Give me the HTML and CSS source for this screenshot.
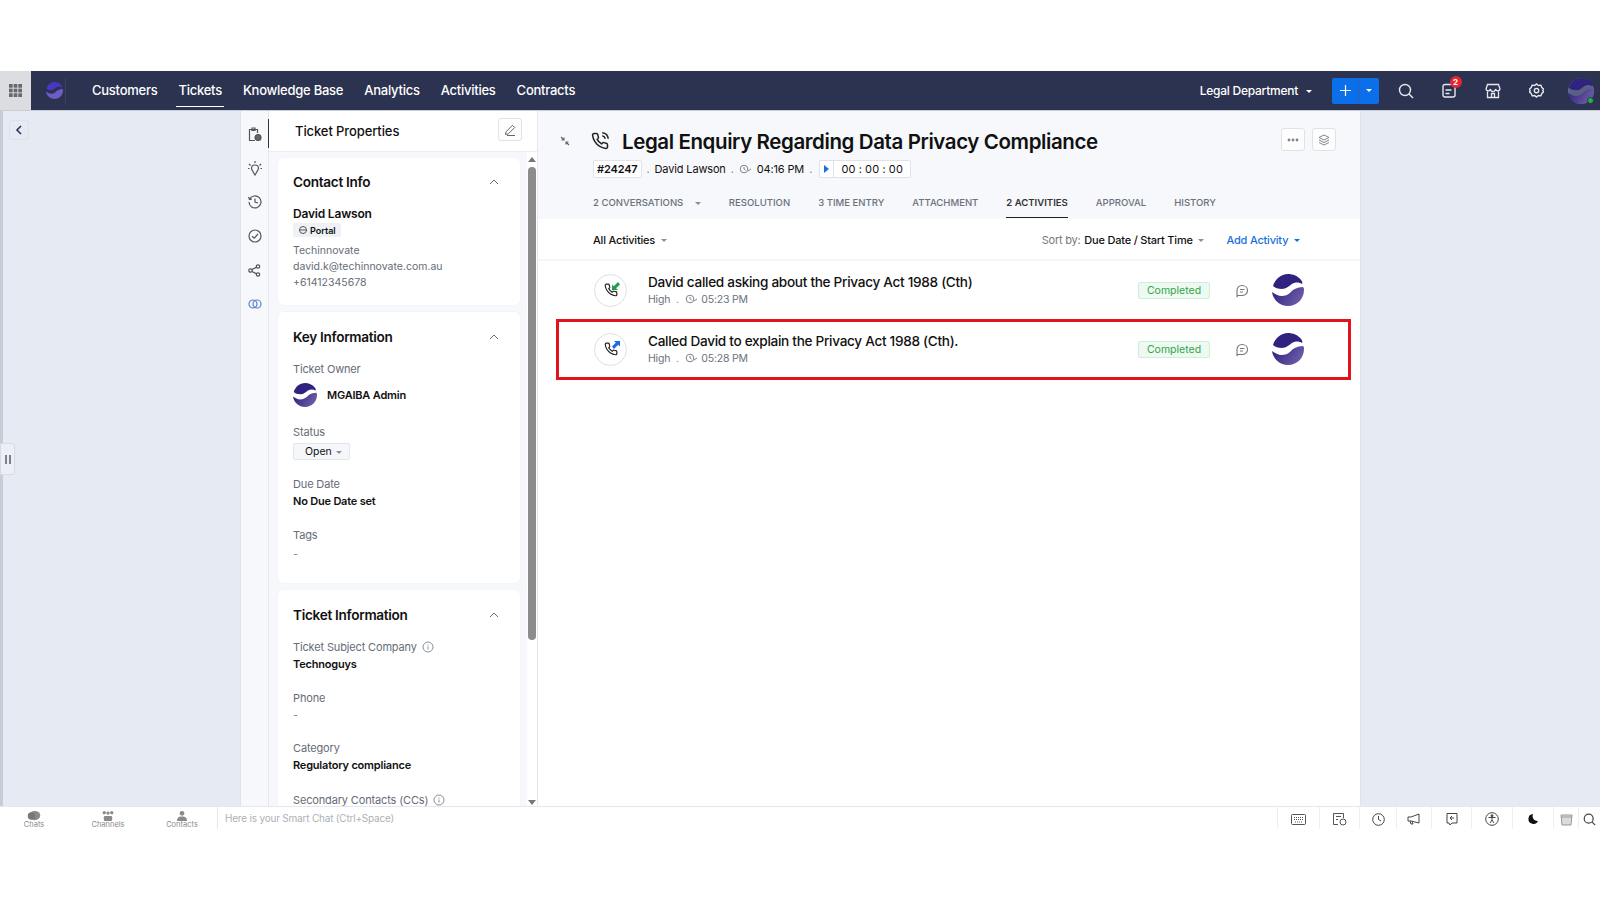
FILE: index.html
```html
<!DOCTYPE html>
<html lang="en">
<head>
    <meta charset="UTF-8">
    <title>Legal Enquiry Regarding Data Privacy Compliance</title>
    <link rel="stylesheet" href="styles.css">
</head>
<body>
    <svg class="defs" width="0" height="0">
        <defs>
            <linearGradient id="logoGrad" x1="0" y1="0" x2="1" y2="0.4">
                <stop offset="0" stop-color="#2c1f7c"/>
                <stop offset="1" stop-color="#6b5aa6"/>
            </linearGradient>
            <symbol id="logo" viewBox="0 0 32 32">
                <path fill="#30237f" d="M1 12C3 5 9 0 16 0c5 0 10 2 13 6 1 1 2 3 1 4-3-2-7-2-10 0-3 2-6 5-10 5-4 0-7-1-9-3z"/>
                <path fill="url(#logoGrad)" d="M31 13c1 1 1 2 1 3 0 9-7 16-16 16C8 32 1 26 0 18c3 2 6 4 10 4 5 0 8-3 11-6 3-2 7-3 10-3z"/>
            </symbol>
            <symbol id="logoBright" viewBox="0 0 32 32">
                <path fill="#4a36c4" d="M1 12C3 5 9 0 16 0c5 0 10 2 13 6 1 1 2 3 1 4-3-2-7-2-10 0-3 2-6 5-10 5-4 0-7-1-9-3z"/>
                <path fill="#6d5cc8" d="M31 13c1 1 1 2 1 3 0 9-7 16-16 16C8 32 1 26 0 18c3 2 6 4 10 4 5 0 8-3 11-6 3-2 7-3 10-3z"/>
            </symbol>
            <symbol id="phone" viewBox="0 0 24 24">
                <path fill="none" stroke="currentColor" stroke-width="2" stroke-linejoin="round" d="M22 16.9v3a2 2 0 0 1-2.2 2 19.8 19.8 0 0 1-8.6-3 19.5 19.5 0 0 1-6-6 19.8 19.8 0 0 1-3.1-8.7A2 2 0 0 1 4.100 2h3a2 2 0 0 1 2 1.700c.1 1 .4 1.900.7 2.800a2 2 0 0 1-.4 2.100L8.100 9.900a16 16 0 0 0 6 6l1.300-1.300a2 2 0 0 1 2.100-.4c.9.3 1.800.6 2.800.7a2 2 0 0 1 1.700 2z"/>
            </symbol>
            <symbol id="phoneCall" viewBox="0 0 24 24">
                <path fill="none" stroke="currentColor" stroke-width="2" stroke-linejoin="round" d="M22 16.9v3a2 2 0 0 1-2.2 2 19.8 19.8 0 0 1-8.6-3 19.5 19.5 0 0 1-6-6 19.8 19.8 0 0 1-3.1-8.700A2 2 0 0 1 4.100 2h3a2 2 0 0 1 2 1.700c.1 1 .4 1.900.7 2.800a2 2 0 0 1-.4 2.100L8.100 9.900a16 16 0 0 0 6 6l1.300-1.300a2 2 0 0 1 2.100-.4c.9.3 1.800.6 2.800.7a2 2 0 0 1 1.700 2zM15 5a5 5 0 0 1 4 4M15 1a9 9 0 0 1 8 8"/>
            </symbol>
            <symbol id="chevUp" viewBox="0 0 12 12">
                <path fill="none" stroke="#666d7a" stroke-width="1" d="M2 8l4-4 4 4"/>
            </symbol>
            <symbol id="info" viewBox="0 0 12 12">
                <circle cx="6" cy="6" r="5" fill="none" stroke="#8a909c"/>
                <path stroke="#8a909c" d="M6 5.500v3M6 3.500v1"/>
            </symbol>
            <symbol id="chat" viewBox="0 0 14 14">
                <path fill="none" stroke="#777" stroke-width="1.100" d="M7 1.500c3 0 5.500 2 5.500 5S10 11.500 7 11.500H2.500l-.5 1.500V6.500c0-3 2-5 5-5z"/>
                <path stroke="#777" d="M5 5.500h4.500M5 8h3"/>
            </symbol>
            <symbol id="clockSmall" viewBox="0 0 14 10">
                <circle cx="5" cy="5" r="3.800" fill="none" stroke="#7d8491"/>
                <path fill="none" stroke="#7d8491" d="M5 3v2l1.500 1M9 7l3-2"/>
            </symbol>
        </defs>
    </svg>

    <div class="top-space"></div>

    <!-- Top navigation -->
    <header class="navbar">
        <div class="apps">
            <svg width="13" height="13" viewBox="0 0 14 14" fill="#666a70">
                <rect width="4" height="4"/><rect x="5" width="4" height="4"/><rect x="10" width="4" height="4"/>
                <rect y="5" width="4" height="4"/><rect x="5" y="5" width="4" height="4"/><rect x="10" y="5" width="4" height="4"/>
                <rect y="10" width="4" height="4"/><rect x="5" y="10" width="4" height="4"/><rect x="10" y="10" width="4" height="4"/>
            </svg>
        </div>
        <div class="brand"><svg width="17" height="17"><use href="#logoBright"/></svg></div>
        <nav class="nav-links">
            <a>Customers</a>
            <a class="active">Tickets</a>
            <a>Knowledge Base</a>
            <a>Analytics</a>
            <a>Activities</a>
            <a>Contracts</a>
        </nav>
        <div class="nav-right">
            <span class="dept">Legal Department <i class="caret caret-white"></i></span>
            <div class="add-btn">
                <span class="add-plus">
                    <svg width="11" height="11" viewBox="0 0 12 12"><path stroke="#fff" stroke-width="1.300" d="M6 0v12M0 6h12"/></svg>
                </span>
                <span class="add-more"><i class="caret caret-white"></i></span>
            </div>
            <span class="nav-icon">
                <svg width="16" height="16" viewBox="0 0 16 16" fill="none" stroke="#e6e8ee" stroke-width="1.400"><circle cx="7" cy="7" r="5.500"/><path d="M11 11l4 4"/></svg>
            </span>
            <span class="nav-icon">
                <svg width="14" height="15" viewBox="0 0 14 15" fill="none" stroke="#e6e8ee" stroke-width="1.400"><rect x="1" y="1.500" width="12" height="12.500" rx="2"/><path d="M3.500 7h6M3.500 10.500h4"/></svg>
                <b class="badge">2</b>
            </span>
            <span class="nav-icon">
                <svg width="16" height="16" viewBox="0 0 16 16" fill="none" stroke="#e6e8ee" stroke-width="1.300"><path d="M2.500 1.500h11L15 6a2.300 2.300 0 0 1-4.500 0 2.400 2.400 0 0 1-5 0A2.300 2.300 0 0 1 1 6zM2.500 8.500v6h11v-6M6.500 14.500V10.500h3v4"/></svg>
            </span>
            <span class="nav-icon">
                <svg width="15" height="15" viewBox="0 0 24 24" fill="none" stroke="#e6e8ee" stroke-width="2.200"><circle cx="12" cy="12" r="3.500"/><path d="M12 1.500l3 2.500 4-.5 1.500 3.800 3 2.700-1.500 2 1.500 2-3 2.700-1.500 3.800-4-.5-3 2.500-3-2.500-4 .5-1.500-3.800-3-2.700 1.500-2-1.500-2 3-2.700L5 3.500l4 .5z"/></svg>
            </span>
            <span class="user">
                <svg width="26" height="26"><circle cx="13" cy="13" r="12.500" fill="#5a5f85" stroke="#6d7290"/><use href="#logo" width="26" height="26"/></svg>
                <i class="online"></i>
            </span>
        </div>
    </header>

    <div class="workspace">
        <!-- Collapsed left pane -->
        <aside class="left-pane">
            <button class="collapse-btn">
                <svg width="8" height="10" viewBox="0 0 8 10"><path fill="none" stroke="#2b3350" stroke-width="1.600" d="M6 1L2 5l4 4"/></svg>
            </button>
            <div class="pane-handle"><i></i><i></i></div>
        </aside>

        <!-- Icon rail -->
        <div class="rail">
            <span class="rail-icon rail-active">
                <svg width="14" height="15" viewBox="0 0 14 15" fill="none" stroke="#555" stroke-width="1.200"><path d="M7 13.500H1.500V2.500h8V6M4 1h3v2.500H4z"/><circle cx="10" cy="10.500" r="3" fill="#666"/></svg>
            </span>
            <span class="rail-icon">
                <svg width="14" height="15" viewBox="0 0 14 15" fill="none" stroke="#555" stroke-width="1.200"><path d="M7 4c2.500 0 3.500 1.800 3.500 3.300 0 1.700-1.500 2.700-2 4.200L7 14l-1.500-2.500c-.5-1.500-2-2.500-2-4.200C3.500 5.800 4.500 4 7 4zM7 0v2M1 3l1.500 1.500M13 3l-1.500 1.500M0 7.500h1.500M12.500 7.500H14"/></svg>
            </span>
            <span class="rail-icon">
                <svg width="14" height="14" viewBox="0 0 14 14" fill="none" stroke="#555" stroke-width="1.200"><path d="M1.500 4.500A6 6 0 1 1 1 7M7 3.500V7l3 1M0.500 2l1 2.500L4 4"/></svg>
            </span>
            <span class="rail-icon">
                <svg width="14" height="14" viewBox="0 0 14 14" fill="none" stroke="#555" stroke-width="1.200"><circle cx="7" cy="7" r="6"/><path d="M4 7.200l2.200 2L10 5"/></svg>
            </span>
            <span class="rail-icon">
                <svg width="13" height="13" viewBox="0 0 13 13" fill="none" stroke="#555" stroke-width="1.200"><circle cx="2.500" cy="6.500" r="1.700"/><circle cx="10" cy="2.500" r="1.700"/><circle cx="10" cy="10.500" r="1.700"/><path d="M4 5.500l4.500-2.300M4 7.500l4.500 2.300"/></svg>
            </span>
            <span class="rail-icon">
                <svg width="14" height="10" viewBox="0 0 14 10" fill="none" stroke="#5b86c4" stroke-width="1.200"><circle cx="5" cy="5" r="4"/><circle cx="9" cy="5" r="4"/></svg>
            </span>
        </div>

        <!-- Ticket properties -->
        <section class="props">
            <div class="props-head">
                <h3>Ticket Properties</h3>
                <button class="icon-btn edit-btn">
                    <svg width="12" height="12" viewBox="0 0 12 12" fill="none" stroke="#666" stroke-width="1"><path d="M1.500 10.500l.6-2.800L8.500 1.300l2.200 2.200-6.400 6.400zM3 11.500h8"/></svg>
                </button>
            </div>
            <div class="props-body">
                <div class="cards">
                    <div class="card card-contact">
                        <div class="card-title">Contact Info <svg width="12" height="12"><use href="#chevUp"/></svg></div>
                        <div class="contact-name">David Lawson</div>
                        <span class="portal">
                            <svg width="8" height="8" viewBox="0 0 8 8" fill="none" stroke="#555"><circle cx="4" cy="4" r="3.500"/><path d="M0.500 4h7"/></svg>
                            Portal
                        </span>
                        <div class="contact-lines">
                            <div>Techinnovate</div>
                            <div>david.k@techinnovate.com.au</div>
                            <div>+61412345678</div>
                        </div>
                    </div>

                    <div class="card card-key">
                        <div class="card-title">Key Information <svg width="12" height="12"><use href="#chevUp"/></svg></div>
                        <div class="label first">Ticket Owner</div>
                        <div class="owner">
                            <svg width="24" height="24"><use href="#logo"/></svg>
                            <span>MGAIBA Admin</span>
                        </div>
                        <div class="label gap">Status</div>
                        <span class="status-pill">Open <i class="caret caret-grey"></i></span>
                        <div class="label gap-sm">Due Date</div>
                        <div class="value">No Due Date set</div>
                        <div class="label gap-lg">Tags</div>
                        <div class="value empty tags-empty">-</div>
                    </div>

                    <div class="card card-ticket">
                        <div class="card-title">Ticket Information <svg width="12" height="12"><use href="#chevUp"/></svg></div>
                        <div class="label first">Ticket Subject Company <svg class="info" width="12" height="12"><use href="#info"/></svg></div>
                        <div class="value">Technoguys</div>
                        <div class="label gap-lg">Phone</div>
                        <div class="value empty">-</div>
                        <div class="label gap">Category</div>
                        <div class="value">Regulatory compliance</div>
                        <div class="label gap-xl">Secondary Contacts (CCs) <svg class="info" width="12" height="12"><use href="#info"/></svg></div>
                    </div>
                </div>
                <div class="scrollbar">
                    <i class="arrow-up"></i>
                    <div class="thumb"></div>
                    <i class="arrow-down"></i>
                </div>
            </div>
        </section>

        <!-- Ticket detail -->
        <main class="detail">
            <div class="detail-head">
                <div class="title-row">
                    <svg class="pin" width="10" height="10" viewBox="0 0 10 10" fill="none" stroke="#666" stroke-width="1.100"><path d="M1 1l3 3M4 1.500V4H1.500M9 9L6 6M6 8.500V6h2.500"/></svg>
                    <svg class="title-phone" width="18" height="18"><use href="#phoneCall"/></svg>
                    <h1>Legal Enquiry Regarding Data Privacy Compliance</h1>
                    <div class="title-actions">
                        <button class="icon-btn">
                            <svg width="12" height="4" viewBox="0 0 12 4" fill="#7d8491"><circle cx="2" cy="2" r="1.400"/><circle cx="6" cy="2" r="1.400"/><circle cx="10" cy="2" r="1.400"/></svg>
                        </button>
                        <button class="icon-btn">
                            <svg width="12" height="12" viewBox="0 0 12 12" fill="none" stroke="#7d8491"><path d="M6 1l5 2.500L6 6 1 3.500zM1 6l5 2.500L11 6M1 8.500L6 11l5-2.500"/></svg>
                        </button>
                    </div>
                </div>
                <div class="meta-row">
                    <span class="ticket-id">#24247</span>
                    <span class="dot">.</span>
                    <span class="meta-name">David Lawson</span>
                    <span class="dot">.</span>
                    <svg class="meta-clock" width="14" height="10"><use href="#clockSmall"/></svg>
                    <span class="meta-time">04:16 PM</span>
                    <span class="dot">.</span>
                    <span class="timer">
                        <span class="timer-play"><i></i></span>
                        <span class="timer-value">00 : 00 : 00</span>
                    </span>
                </div>
                <div class="tabs">
                    <a>2 CONVERSATIONS <i class="caret caret-grey tab-caret"></i></a>
                    <a>RESOLUTION</a>
                    <a>3 TIME ENTRY</a>
                    <a>ATTACHMENT</a>
                    <a class="active">2 ACTIVITIES</a>
                    <a>APPROVAL</a>
                    <a>HISTORY</a>
                </div>
            </div>

            <div class="filter-bar">
                <span class="all-activities">All Activities <i class="caret caret-grey"></i></span>
                <span class="sort"><span class="sort-label">Sort by:</span> Due Date / Start Time <i class="caret caret-grey"></i></span>
                <span class="add-activity">Add Activity <i class="caret caret-blue"></i></span>
            </div>

            <div class="activity">
                <span class="call-icon">
                    <svg width="14" height="14"><use href="#phone"/></svg>
                    <svg class="call-arrow" width="8" height="8" viewBox="0 0 8 8"><path fill="#1f9d4d" d="M0 8V2.500l1.800 1.800L6 0l2 2.500-4 3.800L6 8z"/></svg>
                </span>
                <div class="activity-text">
                    <div class="activity-title">David called asking about the Privacy Act 1988 (Cth)</div>
                    <div class="activity-sub">High <span class="dot">.</span> <svg width="14" height="10"><use href="#clockSmall"/></svg> 05:23 PM</div>
                </div>
                <span class="completed">Completed</span>
                <svg class="chat" width="14" height="14"><use href="#chat"/></svg>
                <svg width="32" height="32"><use href="#logo"/></svg>
            </div>

            <div class="activity highlight">
                <span class="call-icon">
                    <svg width="14" height="14"><use href="#phone"/></svg>
                    <svg class="call-arrow" width="8" height="8" viewBox="0 0 8 8"><path fill="#1a6fe0" d="M8 0v5.500L6.200 3.700 2 8 0 5.500l3.800-3.800L2 0z"/></svg>
                </span>
                <div class="activity-text">
                    <div class="activity-title">Called David to explain the Privacy Act 1988 (Cth).</div>
                    <div class="activity-sub">High <span class="dot">.</span> <svg width="14" height="10"><use href="#clockSmall"/></svg> 05:28 PM</div>
                </div>
                <span class="completed">Completed</span>
                <svg class="chat" width="14" height="14"><use href="#chat"/></svg>
                <svg width="32" height="32"><use href="#logo"/></svg>
            </div>
        </main>

        <aside class="right-pane"></aside>
    </div>

    <!-- Smart chat bar -->
    <footer class="chatbar">
        <div class="chat-tabs">
            <span class="chat-tab">
                <svg width="16" height="12" viewBox="0 0 16 12" fill="#8a8a8a"><ellipse cx="9" cy="5.500" rx="6.500" ry="5.500"/><ellipse cx="5" cy="6" rx="4.500" ry="4.500" fill="#777"/></svg>
                Chats
            </span>
            <span class="chat-tab">
                <svg width="16" height="12" viewBox="0 0 16 12" fill="#8a8a8a"><circle cx="3.500" cy="2" r="2"/><circle cx="12.500" cy="2" r="2"/><circle cx="8" cy="2.500" r="2"/><rect x="3" y="6" width="10" height="6" rx="1.500"/></svg>
                Channels
            </span>
            <span class="chat-tab">
                <svg width="14" height="12" viewBox="0 0 14 12" fill="#8a8a8a"><circle cx="7" cy="2.800" r="2.800"/><path d="M1 12c0-4 2-5.500 6-5.500s6 1.500 6 5.500z"/></svg>
                Contacts
            </span>
        </div>
        <div class="chat-input">Here is your Smart Chat (Ctrl+Space)</div>
        <div class="tray">
            <span class="tray-item tray-w42">
                <svg width="15" height="11" viewBox="0 0 15 11" fill="none" stroke="#555"><rect x=".5" y=".5" width="14" height="10" rx="1"/><path stroke-dasharray="1 1" d="M3 3.500h9M3 5.500h9M4 8h7"/></svg>
            </span>
            <span class="tray-item tray-w40">
                <svg width="15" height="14" viewBox="0 0 15 14" fill="none" stroke="#555"><path d="M6 12.500H1.500v-11h10V6M4 4.500h5M4 7.500h2"/><circle cx="11" cy="10" r="3"/></svg>
            </span>
            <span class="tray-item tray-w37">
                <svg width="13" height="13" viewBox="0 0 13 13" fill="none" stroke="#444"><circle cx="6.500" cy="6.500" r="5.800"/><path d="M6.500 3v3.500l2.500 1.500"/></svg>
            </span>
            <span class="tray-item tray-w35">
                <svg width="14" height="12" viewBox="0 0 14 12" fill="none" stroke="#444"><path d="M1 4h3l8-3v9L4 8H1zM3 8l1 3h2l-1-2.500"/></svg>
            </span>
            <span class="tray-item tray-w40">
                <svg width="12" height="14" viewBox="0 0 12 14" fill="none" stroke="#444"><path d="M1 11V1.500h10V11H6l-2 2-1-2zM8 6H4.500M6 4L4 6l2 2"/></svg>
            </span>
            <span class="tray-item tray-w41">
                <svg width="14" height="14" viewBox="0 0 14 14" fill="none" stroke="#444"><circle cx="7" cy="7" r="6.300"/><circle cx="7" cy="3.800" r="1" fill="#444"/><path d="M3.500 5.500h7M7 5.500V8l-2 3M7 8l2 3"/></svg>
            </span>
            <span class="tray-item tray-w41">
                <svg width="12" height="12" viewBox="0 0 12 12"><path fill="#111" d="M6 1a5 5 0 1 0 5 7A5 5 0 0 1 6 1z"/></svg>
            </span>
            <span class="tray-item tray-w25">
                <svg width="13" height="13" viewBox="0 0 13 13" fill="#dcdcdc" stroke="#999"><path d="M1 2h11l-1 10H2zM1 4h11"/></svg>
            </span>
            <span class="tray-item tray-last">
                <svg width="13" height="13" viewBox="0 0 16 16" fill="none" stroke="#444" stroke-width="1.500"><circle cx="7" cy="7" r="5.500"/><path d="M11 11l4 4"/></svg>
            </span>
        </div>
    </footer>
</body>
</html>
```

FILE: styles.css
```css
* {
    box-sizing: border-box;
}
html, body {
    margin: 0;
    height: 900px;
    overflow: hidden;
}
body {
    background: #fff;
    font-family: Inter, "Liberation Sans", sans-serif;
    color: #111;
    font-size: 11px;
}
.defs {
    position: absolute;
}
button {
    font: inherit;
    padding: 0;
    background: none;
}
.top-space {
    height: 71px;
}

/* carets */
.caret {
    display: inline-block;
    width: 0;
    height: 0;
    border-left: 3px solid transparent;
    border-right: 3px solid transparent;
    border-top: 3px solid #888;
    vertical-align: middle;
    margin-left: 3px;
}
.caret-white {
    border-top-color: #fff;
}
.caret-grey {
    border-top-color: #8a8f99;
}
.caret-blue {
    border-top-color: #1a6fe0;
}

/* navbar */
.navbar {
    display: flex;
    align-items: center;
    height: 39px;
    background: #2b3350;
    color: #fff;
}
.apps {
    width: 31px;
    height: 100%;
    display: flex;
    align-items: center;
    justify-content: center;
    background: #dcdde0;
}
.brand {
    width: 35px;
    height: 26px;
    display: flex;
    align-items: center;
    padding-left: 15px;
    border-right: 1px solid #3a425f;
}
.brand svg {
    flex-shrink: 0;
}
.nav-links {
    display: flex;
    height: 100%;
    gap: 21px;
    margin-left: 26px;
    font-size: 13px;
    font-weight: 500;
    letter-spacing: -0.25px;
}
.nav-links a {
    display: flex;
    align-items: center;
    padding-bottom: 1px;
    white-space: nowrap;
}
.nav-links a.active {
    box-shadow: inset 0 -1px 0 #fff;
    margin: 0 -2px 3px;
    padding: 2px 2px 0;
}
.nav-right {
    display: flex;
    align-items: center;
    margin-left: auto;
}
.dept {
    font-size: 12px;
    font-weight: 500;
    letter-spacing: -0.25px;
    margin-right: 20px;
    padding-bottom: 1px;
}
.dept .caret {
    margin-left: 5px;
}
.add-btn {
    display: flex;
    width: 47px;
    height: 26px;
    background: #0a6fe8;
    border-radius: 2px;
    margin-right: 5px;
}
.add-plus {
    width: 27px;
    display: flex;
    align-items: center;
    justify-content: center;
    border-right: 1px solid #2a62b8;
}
.add-more {
    flex: 1;
    display: flex;
    align-items: center;
    justify-content: center;
}
.add-more .caret {
    margin: 0;
}
.nav-icon {
    position: relative;
    width: 43.500px;
    display: flex;
    justify-content: center;
}
.badge {
    position: absolute;
    top: -7px;
    left: 22px;
    width: 12px;
    height: 12px;
    line-height: 12px;
    border-radius: 50%;
    background: #e3262f;
    color: #fff;
    font-size: 8px;
    text-align: center;
}
.user {
    position: relative;
    display: flex;
    margin-left: 10px;
    margin-right: 6px;
}
.online {
    position: absolute;
    right: 0;
    bottom: 0;
    width: 7px;
    height: 7px;
    border-radius: 50%;
    background: #23b04b;
    border: 1px solid #2b3350;
}

/* main area */
.workspace {
    display: flex;
    height: 696px;
    border-top: 1px solid #c9cdd8;
}
.left-pane {
    position: relative;
    width: 241px;
    background: #e6eaf3;
    border-left: 3px solid #c6cdd9;
    border-right: 1px solid #dfe3ec;
}
.collapse-btn {
    display: flex;
    align-items: center;
    justify-content: center;
    width: 20px;
    height: 20px;
    margin: 9px 0 0 6px;
    border: 1px solid #dde1ea;
    border-radius: 3px;
}
.pane-handle {
    position: absolute;
    top: 332px;
    left: -3px;
    width: 15px;
    height: 32px;
    display: flex;
    align-items: center;
    justify-content: center;
    gap: 2px;
    background: #eceff5;
    border: 1px solid #d6dae3;
    border-radius: 0 3px 3px 0;
}
.pane-handle i {
    width: 2px;
    height: 9px;
    background: #7a8090;
}
.rail {
    width: 28px;
    background: #f6f8fb;
    display: flex;
    flex-direction: column;
    align-items: center;
    padding-top: 15px;
    gap: 18px;
    border-right: 1px solid #e4e7ee;
    position: relative;
}
.rail-icon {
    display: flex;
    align-items: center;
    justify-content: center;
    height: 16px;
}
.rail-active::after {
    content: "";
    position: absolute;
    top: 8px;
    right: -1px;
    width: 1px;
    height: 29px;
    background: #333;
}

/* properties panel */
.props {
    width: 269px;
    background: #f6f8fb;
    display: flex;
    flex-direction: column;
    border-right: 1px solid #e4e7ee;
}
.props-head {
    display: flex;
    align-items: center;
    justify-content: space-between;
    height: 41px;
    flex-shrink: 0;
    background: #fff;
    border-bottom: 1px solid #eceef3;
    padding: 0 15px 0 26px;
}
.props-head h3 {
    margin: 0;
    font-size: 13px;
    font-weight: 500;
    letter-spacing: -0.1px;
}
.icon-btn {
    width: 24px;
    height: 23px;
    display: flex;
    align-items: center;
    justify-content: center;
    border: 1px solid #dfe2e8;
    border-radius: 3px;
    background: #fdfdfe;
}
.edit-btn {
    margin-bottom: 3px;
}
.props-body {
    display: flex;
    flex: 1;
    min-height: 0;
}
.cards {
    width: 258px;
    padding: 6px 7px 0 9px;
    overflow: hidden;
}
.card {
    background: #fff;
    border-radius: 5px;
    box-shadow: 0 0 1px #dfe3ea;
    padding: 14px 20px 0 15px;
    margin-bottom: 7px;
}
.card-contact {
    height: 147px;
}
.card-key {
    height: 271px;
    padding-top: 15px;
}
.card-ticket {
    height: 230px;
    padding-top: 15px;
}
.card-title {
    display: flex;
    align-items: center;
    justify-content: space-between;
    height: 20px;
    font-size: 13.600px;
    font-weight: 600;
    letter-spacing: -0.3px;
}
.contact-name {
    margin-top: 14px;
    line-height: 16px;
    font-size: 12px;
    font-weight: 600;
    letter-spacing: -0.2px;
}
.portal {
    display: inline-flex;
    align-items: center;
    gap: 3px;
    height: 14px;
    margin-top: 1px;
    padding: 0 5px 0 6px;
    background: #eef1f6;
    border-radius: 2px;
    font-size: 9px;
    font-weight: 600;
}
.contact-lines {
    margin-top: 6px;
    line-height: 16px;
    color: #666c78;
    font-size: 10.500px;
}
.label {
    line-height: 16px;
    color: #666c78;
    font-size: 11px;
    letter-spacing: -0.15px;
    display: flex;
    align-items: center;
    gap: 5px;
}
.label.first {
    margin-top: 14px;
}
.label.gap-sm {
    margin-top: 16px;
}
.label.gap {
    margin-top: 17px;
}
.label.gap-lg {
    margin-top: 18px;
}
.label.gap-xl {
    margin-top: 19px;
}
.value {
    margin-top: 1px;
    line-height: 16px;
    font-size: 11px;
    font-weight: 600;
    letter-spacing: -0.2px;
}
.value.empty {
    color: #888;
    font-weight: 400;
}
.value.tags-empty {
    margin-top: 3px;
}
.owner {
    display: flex;
    align-items: center;
    gap: 10px;
    margin-top: 6px;
    font-size: 11px;
    font-weight: 600;
    letter-spacing: -0.2px;
}
.status-pill {
    display: inline-block;
    width: 57px;
    height: 17px;
    line-height: 16px;
    margin-top: 3px;
    padding-left: 11px;
    background: #f5f7fa;
    border: 1px solid #e3e6ec;
    border-radius: 2px;
    font-size: 10.500px;
}
.status-pill .caret {
    margin-left: 1px;
}
.scrollbar {
    width: 10px;
    display: flex;
    flex-direction: column;
    align-items: center;
    background: #fff;
    padding-top: 5px;
}
.arrow-up {
    border-left: 4px solid transparent;
    border-right: 4px solid transparent;
    border-bottom: 5px solid #777;
}
.thumb {
    width: 8px;
    height: 473px;
    margin-top: 5px;
    background: #8c8c8c;
    border-radius: 4px;
}
.arrow-down {
    margin-top: auto;
    margin-bottom: 1px;
    border-left: 4px solid transparent;
    border-right: 4px solid transparent;
    border-top: 5px solid #777;
}

/* ticket detail */
.detail {
    width: 822px;
    background: #fff;
}
.detail-head {
    height: 108px;
    background: #f6f8fb;
    display: flex;
    flex-direction: column;
}
.title-row {
    display: flex;
    align-items: center;
    height: 42px;
    padding: 18px 24px 0 22px;
}
.pin {
    margin-right: 21px;
    flex-shrink: 0;
}
.title-phone {
    margin-right: 13px;
    color: #222;
    flex-shrink: 0;
}
.title-row h1 {
    margin: 0;
    font-size: 20.500px;
    font-weight: 600;
    letter-spacing: -0.4px;
    white-space: nowrap;
}
.title-actions {
    margin-left: auto;
    margin-top: -3px;
    display: flex;
    gap: 7px;
}
.meta-row {
    display: flex;
    align-items: center;
    height: 18px;
    margin: 7px 0 0 55px;
    font-size: 11px;
    letter-spacing: -0.15px;
}
.ticket-id {
    height: 18px;
    line-height: 16px;
    padding: 0 3px;
    background: #fff;
    border: 1px solid #e1e4ea;
    border-radius: 2px;
    font-weight: 600;
    font-size: 11px;
}
.dot {
    color: #888;
    margin: 0 5px;
}
.meta-clock {
    margin-right: 4px;
}
.timer {
    display: flex;
    align-items: center;
    width: 92px;
    height: 18px;
    border: 1px solid #dfe2e8;
    border-radius: 2px;
    background: #fff;
    margin-left: 2px;
}
.timer-play {
    width: 14px;
    height: 100%;
    display: flex;
    align-items: center;
    justify-content: center;
    border-right: 1px solid #dfe2e8;
}
.timer-play i {
    border-left: 5px solid #1a6fe0;
    border-top: 4px solid transparent;
    border-bottom: 4px solid transparent;
}
.timer-value {
    flex: 1;
    text-align: center;
    font-size: 11px;
    letter-spacing: 0.1px;
}
.tabs {
    display: flex;
    gap: 28px;
    margin: 18px 0 0 55px;
    font-size: 9.550px;
    font-weight: 500;
    color: #6b717d;
}
.tabs a {
    padding-bottom: 7px;
    line-height: 14px;
    height: 22px;
    white-space: nowrap;
}
.tabs a.active {
    color: #333;
    font-weight: 600;
    border-bottom: 1px solid #222;
}
.tab-caret {
    margin-left: 9px;
}
.filter-bar {
    display: flex;
    align-items: center;
    height: 42px;
    padding: 1px 60px 0 55px;
    border-bottom: 2px solid #f4f5f8;
    font-size: 11px;
    font-weight: 500;
    letter-spacing: -0.2px;
}
.sort {
    margin-left: auto;
}
.sort-label {
    color: #777;
    font-weight: 400;
    margin-right: 1px;
}
.add-activity {
    margin-left: 22px;
    color: #1a6fe0;
}
.activity {
    display: flex;
    align-items: center;
    height: 58px;
    margin: 0 9px 0 17px;
    padding: 0 47px 0 39px;
}
.activity.highlight {
    height: 61px;
    margin-left: 18px;
    border: 3px solid #e3131b;
    padding: 0 44px 1px 35px;
}
.call-icon {
    position: relative;
    width: 33px;
    height: 33px;
    display: flex;
    align-items: center;
    justify-content: center;
    border: 1px solid #dcdfe6;
    border-radius: 50%;
    background: #fff;
    color: #222;
}
.call-arrow {
    position: absolute;
    top: 7px;
    right: 6px;
}
.activity-text {
    flex: 1;
    margin-left: 21px;
}
.activity-title {
    font-size: 13.600px;
    font-weight: 500;
    letter-spacing: -0.3px;
    line-height: 18px;
}
.activity-sub {
    margin-top: 2px;
    color: #6b717d;
    font-size: 10.500px;
    letter-spacing: -0.2px;
    line-height: 14px;
}
.activity-sub .dot {
    margin: 0 3px;
}
.activity-sub svg {
    vertical-align: -1px;
}
.completed {
    width: 72px;
    height: 17px;
    line-height: 15px;
    text-align: center;
    color: #2ea44f;
    background: #eef9f0;
    border: 1px solid #cfeedd;
    border-radius: 2px;
    font-size: 10.500px;
}
.chat {
    margin: 2px 23px 0 25px;
}
.right-pane {
    flex: 1;
    background: #e6eaf3;
    border-left: 1px solid #dfe3ec;
}

/* smart chat */
.chatbar {
    display: flex;
    height: 23px;
    background: #fff;
    border-top: 1px solid #e4e7ee;
}
.chat-tabs {
    display: flex;
    gap: 6px;
    width: 218px;
    border-right: 1px solid #e6e8ed;
}
.chat-tab {
    width: 68px;
    display: flex;
    flex-direction: column;
    align-items: center;
    font-size: 7.500px;
    line-height: 8px;
    color: #8a8a8a;
    padding-top: 4px;
}
.chat-input {
    padding: 5px 0 0 7px;
    font-size: 10px;
    color: #aeb1b8;
    letter-spacing: -0.2px;
}
.tray {
    margin-left: auto;
    display: flex;
}
.tray-item {
    display: flex;
    align-items: center;
    justify-content: center;
    padding-top: 2px;
    border-left: 1px solid #eceef2;
}
.tray-w42 {
    width: 42px;
}
.tray-w40 {
    width: 40px;
}
.tray-w37 {
    width: 37px;
}
.tray-w35 {
    width: 35px;
}
.tray-w41 {
    width: 41px;
}
.tray-w25 {
    width: 25px;
}
.tray-last {
    width: 22px;
}
.info {
    flex-shrink: 0;
}
```
